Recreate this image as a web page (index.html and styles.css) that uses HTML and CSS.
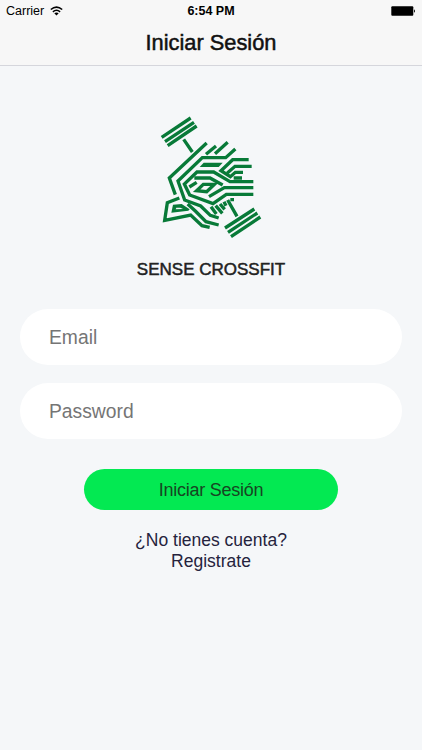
FILE: index.html
```html
<!DOCTYPE html>
<html lang="es">
<head>
    <meta charset="UTF-8">
    <meta name="viewport" content="width=device-width, initial-scale=1.0">
    <title>Iniciar Sesión</title>
    <link rel="stylesheet" href="styles.css">
</head>
<body>
    <header class="header">
        <div class="status-bar">
            <div class="carrier">
                <span>Carrier</span>
                <svg class="wifi" viewBox="0 0 13 10">
                    <path d="M0.8 3.5 Q6.5 -1.3 12.2 3.5 M2.9 5.8 Q6.5 2.7 10.1 5.8" fill="none" stroke="#000" stroke-width="1.6"/>
                    <path d="M4.3 7.3 Q6.5 5.7 8.7 7.3 L6.5 9.6 Z"/>
                </svg>
            </div>
            <span class="time">6:54 PM</span>
            <div class="battery-box">
                <svg class="battery" viewBox="0 0 25 10">
                    <rect x="0.3" y="0.3" width="22" height="9.4" rx="1"/>
                    <path d="M23 3.2 Q25 5 23 6.8 Z"/>
                </svg>
            </div>
        </div>
        <h1>Iniciar Sesión</h1>
    </header>
    <main class="content">
        <svg class="logo" viewBox="0 0 336 405">
            <!-- barbell -->
            <path d="M20 82 L107 24 M30 95 L117 37 M38 107 L125 48 M86 88 L112 126"/>
            <path d="M210 354 L298 297 M219 367 L307 309 M228 380 L316 321 M218 270 L246 319"/>
            <!-- mane -->
            <path d="M155 99 L43 204 L61 254"/>
            <path d="M183 108 L153 133 M218 97 L180 131"/>
            <path d="M241 117 L212 143 H142 L69 213 L89 270 L137 288 L166 316 L191 324"/>
            <path class="fill" d="M134 171 L146 158 H203 L191 171 Z"/>
            <path d="M281 149 H233 L198 182 L226 200 L241 187 H264 M290 169 H240 L217 189 M236 204 H261"/>
            <!-- face -->
            <path d="M295 215 H225 L176 186 H126 L88 222 L104 255 L174 281 L214 253 H295"/>
            <path d="M295 233 H208 L162 260 M118 204 H165 L203 225"/>
            <path d="M125 242 L145 223 H178 L155 245 Z M103 231 L125 217"/>
            <!-- jaw -->
            <path d="M73 264 L37 278 L29 331 L107 315 L141 347 L164 352"/>
            <path d="M98 282 L121 303 L153 335 L191 345"/>
            <path class="fill" d="M49 308 L54 284 L80 282 L104 298 L100 302 Z"/>
            <path class="hole" d="M62 298 L64 293 L76 293 L84 297 Z"/>
            <path d="M168 290 L184 312 M182 287 L202 310 M195 282 L209 298 M207 275 L213 287 M226 269 H237"/>
        </svg>
        <h2>SENSE CROSSFIT</h2>
        <form class="login-form">
            <input type="email" placeholder="Email">
            <input type="password" placeholder="Password">
            <button type="button">Iniciar Sesión</button>
        </form>
        <p class="register">¿No tienes cuenta?<br>Registrate</p>
    </main>
</body>
</html>
```
FILE: styles.css
```css
* {
    box-sizing: border-box;
}

body {
    margin: 0;
    min-height: 100vh;
    background: #f5f7f9;
    font-family: "Liberation Sans", Arial, sans-serif;
    color: #222;
}

.header {
    height: 66px;
    background: #f7f7f7;
    border-bottom: 1px solid #d5d6dc;
}

.status-bar {
    display: grid;
    grid-template-columns: 1fr auto 1fr;
    align-items: center;
    height: 22px;
    padding: 0 6px;
    font-size: 12.5px;
    color: #000;
}

.carrier {
    display: flex;
    align-items: center;
    gap: 6px;
}

.wifi {
    width: 13px;
    height: 10px;
}

.time {
    font-weight: bold;
}

.battery-box {
    display: flex;
    justify-content: flex-end;
}

.battery {
    width: 25px;
    height: 10px;
}

h1 {
    margin: 8px 0 0;
    text-align: center;
    font-size: 21.8px;
    font-weight: normal;
    line-height: 26px;
    color: #111;
    -webkit-text-stroke: 0.5px #111;
}

.content {
    display: flex;
    flex-direction: column;
    align-items: center;
    padding: 44px 20px 0;
}

.logo {
    width: 112px;
    height: 135px;
    fill: none;
    stroke: #087a38;
    stroke-width: 10;
}

.logo .fill {
    fill: #087a38;
    stroke: none;
}

.logo .hole {
    fill: #f5f7f9;
    stroke: none;
}

h2 {
    margin: 14px 0 0;
    font-size: 17px;
    font-weight: normal;
    line-height: 22px;
    color: #222;
    -webkit-text-stroke: 0.5px #222;
}

.login-form {
    display: flex;
    flex-direction: column;
    align-items: center;
    width: 100%;
    margin-top: 28px;
}

input {
    width: 100%;
    height: 56px;
    margin-bottom: 18px;
    padding: 1px 29px 0;
    border: none;
    border-radius: 28px;
    background: #fff;
    font-family: inherit;
    font-size: 19.3px;
}

input::placeholder {
    color: #757575;
}

button {
    width: 254px;
    height: 41px;
    margin-top: 12px;
    padding-top: 2px;
    border: none;
    border-radius: 21px;
    background: #03e952;
    font-family: inherit;
    font-size: 18px;
    letter-spacing: -0.25px;
    color: #174522;
}

.register {
    margin: 20px 0 0;
    text-align: center;
    font-size: 17.5px;
    line-height: 21px;
    color: #25233d;
}
```
